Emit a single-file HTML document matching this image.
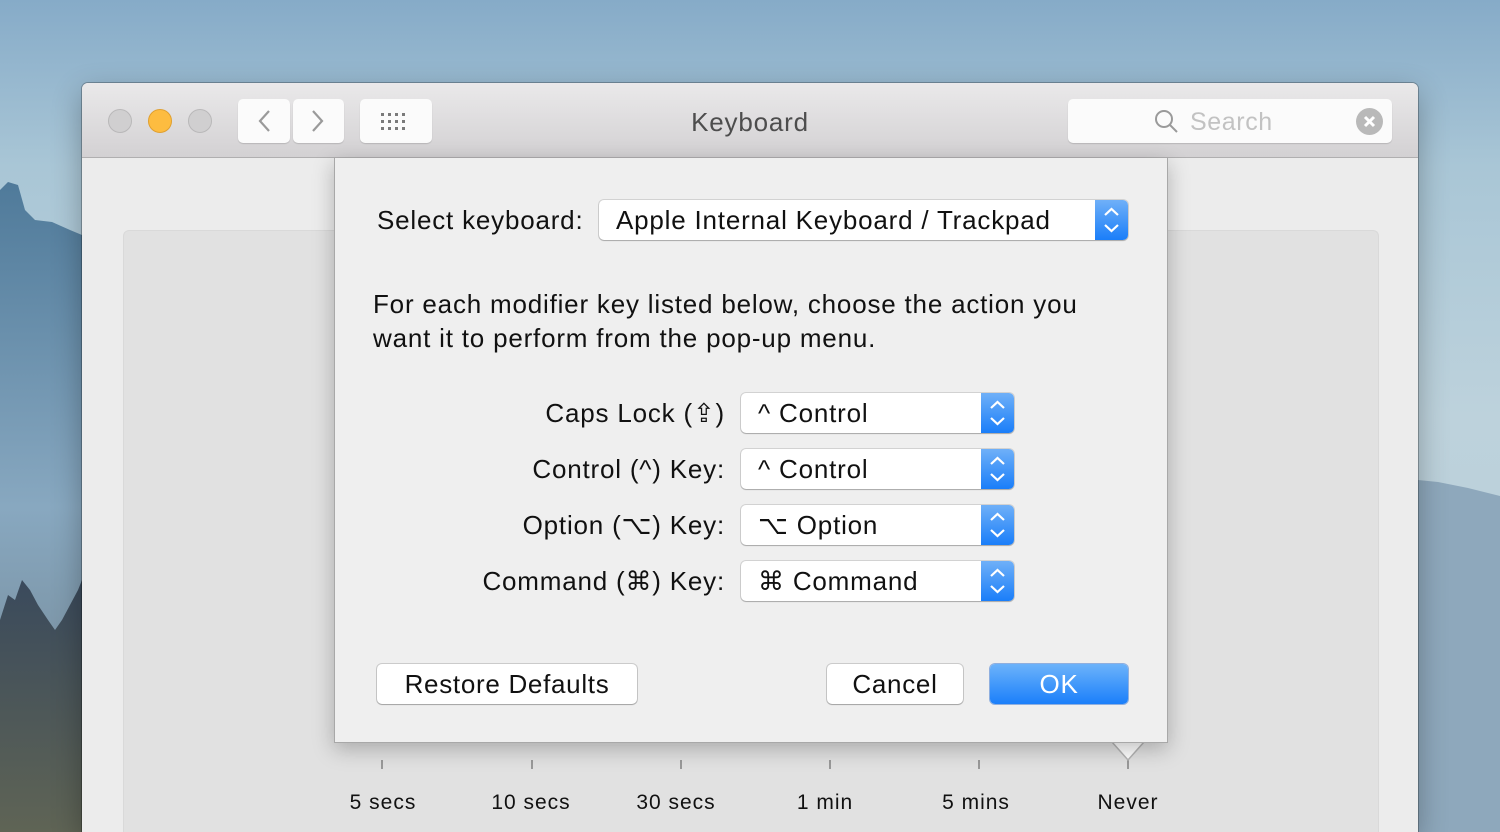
<!DOCTYPE html>
<html><head><meta charset="utf-8"><style>
*{margin:0;padding:0;box-sizing:border-box}
html,body{width:1500px;height:832px;overflow:hidden}
body{position:relative;font-family:"Liberation Sans",sans-serif;
background:linear-gradient(180deg,#86abc8 0%,#a9c6d6 20%,#bdd2dc 50%,#b8ccd6 100%);}
.abs{position:absolute}
.win{left:82px;top:83px;width:1336px;height:749px;background:#ececec;border-radius:6px 6px 0 0;box-shadow:0 0 0 1px rgba(0,0,0,.25),0 10px 30px rgba(0,0,0,.3);overflow:hidden}
.tb{left:0;top:0;width:1336px;height:75px;background:linear-gradient(#eae9ea,#d3d1d3);border-bottom:1px solid #b0afb0}
.light{width:24px;height:24px;border-radius:50%;top:26px;background:#d0cfd0;border:1px solid #b9b8b9}
.tbtn{background:#fbfbfb;border-radius:5px;height:44px;top:16px;box-shadow:0 1px 1px rgba(0,0,0,.15)}
.panel{left:41px;top:147px;width:1256px;height:602px;background:#e1e1e1;border-radius:6px 6px 0 0;border:1px solid #d9d9d9;border-bottom:none}
.sheet{left:334px;top:158px;width:834px;height:585px;background:#efefef;border:1px solid #a8a8a8;border-top:none;box-shadow:0 6px 20px rgba(0,0,0,.25)}
.t{font-size:26px;letter-spacing:0.8px;color:#111;white-space:nowrap}
.pop{background:#fff;border-radius:5px;height:40px;box-shadow:0 0 0 1px rgba(0,0,0,.12),0 1px 1px rgba(0,0,0,.2)}
.pop .arr{position:absolute;right:0;top:0;width:33px;height:40px;background:linear-gradient(#6fb0f8,#1a7ef9);border-radius:0 5px 5px 0}
.pop .lbl{position:absolute;left:17px;top:5px;font-size:26px;letter-spacing:0.8px;color:#111;white-space:nowrap}
.btn{background:#fff;border-radius:5px;height:40px;box-shadow:0 0 0 1px rgba(0,0,0,.15),0 1px 1px rgba(0,0,0,.2);font-size:26px;letter-spacing:0.7px;text-align:center;line-height:40px;color:#111}
.tick{width:2px;height:9px;background:#999;top:760px}
.tl{top:791px;font-size:21px;letter-spacing:1px;color:#111;width:150px;text-align:center;line-height:24px}
</style></head><body>
<svg class="abs" style="left:0;top:150px" width="82" height="682" viewBox="0 0 82 682">
<defs><linearGradient id="m" x1="0" y1="0" x2="0" y2="1"><stop offset="0" stop-color="#4f7a9a"/><stop offset=".5" stop-color="#88a8c0"/><stop offset="1" stop-color="#6d7d86"/></linearGradient>
<linearGradient id="g" x1="0" y1="0" x2="0" y2="1"><stop offset="0" stop-color="#3a4a5c"/><stop offset="1" stop-color="#5f6455"/></linearGradient></defs>
<path d="M0 40 L8 32 L18 35 L25 60 L35 70 L52 72 L70 80 L82 85 L82 682 L0 682Z" fill="url(#m)"/>
<path d="M0 470 L8 445 L15 450 L22 430 L30 440 L38 455 L48 470 L55 480 L62 470 L70 455 L78 440 L82 430 L82 682 L0 682Z" fill="url(#g)"/>
</svg>
<svg class="abs" style="left:1418px;top:480px" width="82" height="352"><path d="M0 0 L20 2 L50 8 L82 16 L82 352 L0 352Z" fill="#8ea8bc"/></svg>
<div class="abs win">
 <div class="abs tb">
  <div class="abs light" style="left:26px"></div>
  <div class="abs light" style="left:66px;background:#fdbc40;border-color:#e0a030"></div>
  <div class="abs light" style="left:106px"></div>
  <div class="abs tbtn" style="left:156px;width:52px"><svg width="52" height="44"><path d="M31 12 L22 22 L31 32" fill="none" stroke="#9a9a9a" stroke-width="2.2"/></svg></div>
  <div class="abs tbtn" style="left:211px;width:51px"><svg width="51" height="44"><path d="M20 12 L29 22 L20 32" fill="none" stroke="#9a9a9a" stroke-width="2.2"/></svg></div>
  <div class="abs tbtn" style="left:278px;width:72px"><svg width="72" height="44"><g fill="#7a7a7a">
   <rect x="21" y="14" width="3" height="3"/><rect x="28" y="14" width="3" height="3"/><rect x="35" y="14" width="3" height="3"/><rect x="42" y="14" width="3" height="3"/>
   <rect x="21" y="21" width="3" height="3"/><rect x="28" y="21" width="3" height="3"/><rect x="35" y="21" width="3" height="3"/><rect x="42" y="21" width="3" height="3"/>
   <rect x="21" y="28" width="3" height="3"/><rect x="28" y="28" width="3" height="3"/><rect x="35" y="28" width="3" height="3"/><rect x="42" y="28" width="3" height="3"/></g></svg></div>
  <div class="abs" style="left:0;width:1336px;top:24px;text-align:center;font-size:26px;letter-spacing:0.8px;color:#4d4d4d">Keyboard</div>
  <div class="abs" style="left:986px;top:16px;width:324px;height:44px;background:#fbfbfb;border-radius:5px;box-shadow:0 1px 1px rgba(0,0,0,.15)">
   <svg class="abs" style="left:86px;top:10px" width="26" height="26"><circle cx="10" cy="10" r="8" fill="none" stroke="#9a9a9a" stroke-width="2"/><path d="M16 16 L23 23" stroke="#9a9a9a" stroke-width="2"/></svg>
   <div class="abs" style="left:122px;top:9px;font-size:25px;letter-spacing:0.6px;color:#c2c2c2">Search</div>
   <svg class="abs" style="left:288px;top:9px" width="27" height="27"><circle cx="13.5" cy="13.5" r="13.5" fill="#b9b9b9"/><path d="M9 9 L18 18 M18 9 L9 18" stroke="#fff" stroke-width="3"/></svg>
  </div>
 </div>
 <div class="abs panel"></div>
</div>
<div class="abs tick" style="left:381px"></div><div class="abs tick" style="left:531px"></div><div class="abs tick" style="left:680px"></div><div class="abs tick" style="left:829px"></div><div class="abs tick" style="left:978px"></div><div class="abs tick" style="left:1127px"></div>
<svg class="abs" style="left:1110px;top:740px" width="36" height="24"><path d="M2 2 L18 20 L34 2" fill="#fff" stroke="#b5b5b5" stroke-width="1.5"/></svg>
<div class="abs tl" style="left:308px">5 secs</div><div class="abs tl" style="left:456px">10 secs</div><div class="abs tl" style="left:601px">30 secs</div><div class="abs tl" style="left:750px">1 min</div><div class="abs tl" style="left:901px">5 mins</div><div class="abs tl" style="left:1053px">Never</div>
<div class="abs sheet">
 <div class="abs t" style="left:42px;top:47px">Select keyboard:</div>
 <div class="abs pop" style="left:264px;top:42px;width:529px"><div class="lbl">Apple Internal Keyboard / Trackpad</div><div class="arr"><svg width="33" height="40"><path d="M10 15 L16.5 9 L23 15 M10 25 L16.5 31 L23 25" fill="none" stroke="#fff" stroke-width="2.2"/></svg></div></div>
 <div class="abs t" style="left:38px;top:129px;line-height:34px">For each modifier key listed below, choose the action you<br>want it to perform from the pop-up menu.</div>
 <div class="abs t" style="right:442px;top:240px">Caps Lock (⇪)</div>
 <div class="abs t" style="right:442px;top:296px">Control (^) Key:</div>
 <div class="abs t" style="right:442px;top:352px">Option (⌥) Key:</div>
 <div class="abs t" style="right:442px;top:408px">Command (⌘) Key:</div>
 <div class="abs pop" style="left:406px;top:235px;width:273px"><div class="lbl">^ Control</div><div class="arr"><svg width="33" height="40"><path d="M10 15 L16.5 9 L23 15 M10 25 L16.5 31 L23 25" fill="none" stroke="#fff" stroke-width="2.2"/></svg></div></div>
 <div class="abs pop" style="left:406px;top:291px;width:273px"><div class="lbl">^ Control</div><div class="arr"><svg width="33" height="40"><path d="M10 15 L16.5 9 L23 15 M10 25 L16.5 31 L23 25" fill="none" stroke="#fff" stroke-width="2.2"/></svg></div></div>
 <div class="abs pop" style="left:406px;top:347px;width:273px"><div class="lbl">⌥ Option</div><div class="arr"><svg width="33" height="40"><path d="M10 15 L16.5 9 L23 15 M10 25 L16.5 31 L23 25" fill="none" stroke="#fff" stroke-width="2.2"/></svg></div></div>
 <div class="abs pop" style="left:406px;top:403px;width:273px"><div class="lbl">⌘ Command</div><div class="arr"><svg width="33" height="40"><path d="M10 15 L16.5 9 L23 15 M10 25 L16.5 31 L23 25" fill="none" stroke="#fff" stroke-width="2.2"/></svg></div></div>
 <div class="abs btn" style="left:42px;top:506px;width:260px">Restore Defaults</div>
 <div class="abs btn" style="left:492px;top:506px;width:136px">Cancel</div>
 <div class="abs btn" style="left:655px;top:506px;width:138px;background:linear-gradient(#6cb3fa,#1b7ffa);color:#fff;box-shadow:0 0 0 1px rgba(0,80,200,.4)">OK</div>
</div>
</body></html>
